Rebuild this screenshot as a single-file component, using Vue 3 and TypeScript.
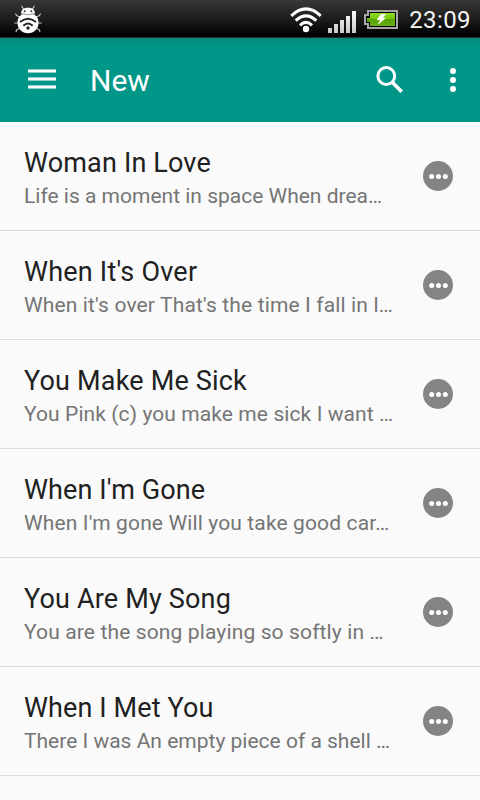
<script setup lang="ts">
interface Song {
  title: string
  lyric: string
  titleTracking: string
  lyricTracking: string
}

const songs: Song[] = [
  { title: 'Woman In Love', lyric: 'Life is a moment in space When drea…', titleTracking: '0.16px', lyricTracking: '0px' },
  { title: "When It's Over", lyric: "When it's over That's the time I fall in l…", titleTracking: '0.22px', lyricTracking: '0.14px' },
  { title: 'You Make Me Sick', lyric: 'You Pink (c) you make me sick I want …', titleTracking: '0.18px', lyricTracking: '0.09px' },
  { title: "When I'm Gone", lyric: "When I'm gone Will you take good car…", titleTracking: '0.1px', lyricTracking: '0.13px' },
  { title: 'You Are My Song', lyric: 'You are the song playing so softly in …', titleTracking: '0.17px', lyricTracking: '0.13px' },
  { title: 'When I Met You', lyric: 'There I was An empty piece of a shell …', titleTracking: '0.11px', lyricTracking: '0px' },
]
</script>

<template>
  <div class="screen">
    <header class="status">
      <svg class="bug" width="28" height="30" viewBox="0 0 28 30">
        <g fill="none" stroke="#c9c9c9" stroke-width="1.1">
          <path d="M6 12 2.500 10.500 1.500 8.500M22 12l3.500-1.500 1-2M4.500 18H.5M23.500 18h4M5.500 23l-3 2-.5 2M22.500 23l3 2 .5 2M9.500 4 7.500 .8M18.500 4 20.500 .8" />
        </g>
        <path d="M7 8C7.500 4.500 9.500 2.800 14 2.800s6.500 1.700 7 5.200l-1 2h-12z" fill="#fff" />
        <path d="M14 8.500c8 0 10.500 4 10.500 9.500S20 28.300 14 28.300 3.500 23.500 3.500 18 6 8.500 14 8.500z" fill="#fff" />
        <path d="M6.500 8.500Q14 11 21.500 8.500" fill="none" stroke="#777" stroke-width=".8" />
        <circle cx="10.700" cy="6.300" r="1" fill="#333" />
        <circle cx="17.300" cy="6.300" r="1" fill="#333" />
        <g fill="none" stroke="#252525" stroke-width="2">
          <path d="M6 17q8-6.500 16 0M9.300 20.800q4.700-4.600 9.400 0" />
        </g>
        <circle cx="14" cy="23" r="1.700" fill="#252525" />
      </svg>
      <div class="indicators">
        <svg class="wifi" width="32" height="26" viewBox="0 0 32 26">
          <g fill="none" stroke="#fff" stroke-width="3">
            <path d="M1.300 8.800Q16-5 30.700 8.800" />
            <path d="M5.700 13.700Q16 4 26.300 13.700" />
            <path d="M10 18.300Q16 12.500 22 18.300" />
          </g>
          <circle cx="16" cy="22" r="3.200" fill="#fff" />
        </svg>
        <svg class="signal" width="28" height="22" viewBox="0 0 28 22">
          <defs>
            <linearGradient id="bars" x1="0" y1="0" x2="0" y2="1">
              <stop offset="0" stop-color="#fff" />
              <stop offset="1" stop-color="#c6c6c6" />
            </linearGradient>
          </defs>
          <path fill="url(#bars)" d="M0 17h4v5H0zM6 13h4v9H6zM12 9h4v13h-4zM18 5h4v17h-4zM24 0h4v22h-4z" />
        </svg>
        <svg class="battery" width="34" height="19" viewBox="0 0 34 19">
          <defs>
            <linearGradient id="charge" x1="0" y1="0" x2="0" y2="1">
              <stop offset="0" stop-color="#8edb22" />
              <stop offset=".48" stop-color="#75c610" />
              <stop offset=".5" stop-color="#58a507" />
              <stop offset="1" stop-color="#66ad16" />
            </linearGradient>
          </defs>
          <path d="M4 1h29v17H4v-4H1V5h3z" fill="#050505" stroke="#a6a6a6" stroke-width="2" />
          <path d="M6 3h25v13H6v-4H3V8h3z" fill="url(#charge)" />
          <path d="M17 4h5l-3 4h3l-8.500 7 2.500-5h-3.500z" fill="#fff" />
        </svg>
        <span class="clock">23:09</span>
      </div>
    </header>

    <nav class="toolbar">
      <svg class="menu" width="28" height="20" viewBox="0 0 28 20">
        <path d="M0 0h28v4H0zM0 8h28v4H0zM0 16h28v4H0z" fill="#fff" fill-opacity=".55" />
        <path d="M0 1h28v2H0zM0 9h28v2H0zM0 17h28v2H0z" fill="#fff" />
      </svg>
      <h1 class="heading">New</h1>
      <svg class="search" width="28" height="28" viewBox="0 0 28 28">
        <circle cx="10.300" cy="10" r="8.400" fill="none" stroke="#fff" stroke-width="3" />
        <path d="M16.300 16.200 25.700 25.700" stroke="#fff" stroke-width="3.700" />
      </svg>
      <svg class="overflow" width="6" height="24" viewBox="0 0 6 24">
        <g fill="#fff">
          <circle cx="3" cy="3" r="3" />
          <circle cx="3" cy="12" r="3" />
          <circle cx="3" cy="21" r="3" />
        </g>
      </svg>
    </nav>

    <main class="songs">
      <article v-for="song in songs" :key="song.title" class="song">
        <div class="words">
          <h2 class="title" :style="{ letterSpacing: song.titleTracking }">{{ song.title }}</h2>
          <p class="lyric" :style="{ letterSpacing: song.lyricTracking }">{{ song.lyric }}</p>
        </div>
        <svg class="more" width="30" height="30" viewBox="0 0 30 30">
          <circle cx="15" cy="15" r="15" fill="#848484" />
          <g fill="#fff">
            <circle cx="8.700" cy="15.500" r="2.500" />
            <circle cx="15.500" cy="15.500" r="2.500" />
            <circle cx="22.300" cy="15.500" r="2.500" />
          </g>
        </svg>
      </article>
    </main>
  </div>
</template>

<style>
body {
  margin: 0;
  background: #fafafa;
}
</style>

<style scoped>
.screen {
  width: 480px;
  height: 800px;
  overflow: hidden;
  background: #fafafa;
  font-family: Roboto, "Liberation Sans", sans-serif;
}
.status {
  display: flex;
  justify-content: space-between;
  box-sizing: border-box;
  height: 38px;
  padding: 0 9px 0 13.6px;
  background: linear-gradient(#383836, #1c1c1b 50%, #000 94%, #000 96%, #2b2b2b 97%);
}
.bug {
  margin-top: 5px;
}
.indicators {
  display: flex;
  align-items: flex-start;
}
.wifi {
  margin: 7px 6px 0 0;
}
.signal {
  margin: 11px 8px 0 0;
}
.battery {
  margin: 10px 11px 0 0;
}
.clock {
  font-size: 24px;
  line-height: 28px;
  margin-top: 6px;
  letter-spacing: 0.4px;
  color: #f3f3f3;
}
.toolbar {
  display: flex;
  align-items: center;
  box-sizing: border-box;
  height: 84px;
  padding: 0 24px 0 28px;
  background: linear-gradient(#00877a, #009688 7px);
}
.menu {
  margin-bottom: 2px;
}
.heading {
  flex: 1;
  margin: 2px 0 0 34px;
  font-size: 30px;
  line-height: 36px;
  font-weight: 400;
  color: #fff;
}
.search {
  margin-right: 46px;
}
.song {
  display: flex;
  justify-content: space-between;
  box-sizing: border-box;
  height: 109px;
  padding: 25px 27px 0 24px;
  border-bottom: 1px solid #dcdcdc;
}
.words {
  white-space: nowrap;
}
.title {
  margin: 0;
  font-size: 27px;
  line-height: 32px;
  font-weight: 400;
  color: #212121;
}
.lyric {
  margin: 5px 0 0;
  font-size: 21px;
  line-height: 25px;
  color: #757575;
}
.more {
  margin-top: 14px;
}
</style>
